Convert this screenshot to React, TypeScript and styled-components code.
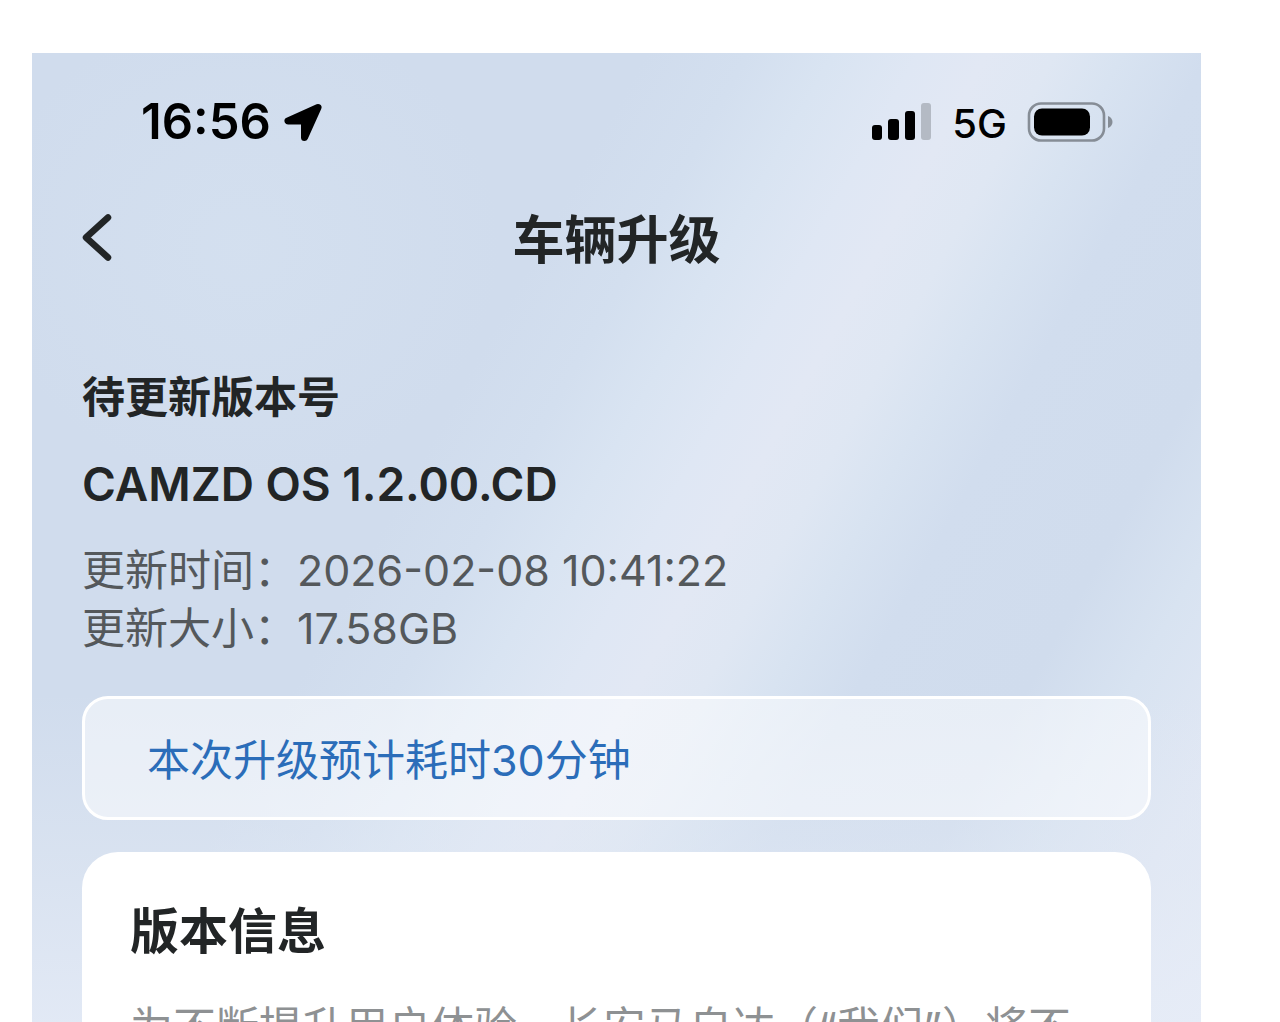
import React from "react";
import styled, { createGlobalStyle } from "styled-components";

const GlobalStyle = createGlobalStyle`
  *, *::before, *::after { box-sizing: border-box; }
  body {
    margin: 0;
    background: #fff;
    color: #222526;
    font-family: Inter, "Noto Sans CJK SC", sans-serif;
  }
  h1, h2, p, dl, dd { margin: 0; }
`;

const Page = styled.div`
  display: flex;
  height: 100vh;
  padding: 53px 79px 0 32px;
  overflow: hidden;
`;

const Screen = styled.div`
  flex: 1;
  min-width: 0;
  overflow: hidden;
  background:
    radial-gradient(ellipse 260px 240px at 18% 20%, rgba(213, 225, 240, 0.7), rgba(213, 225, 240, 0)),
    linear-gradient(180deg, rgba(226, 233, 244, 0) 66%, rgba(226, 233, 244, 0.5) 84%, rgba(230, 236, 247, 0.8) 100%),
    linear-gradient(119deg, #d0dced 0%, #d0dced 36%, #d3dfef 42%, #d9e4f2 47%, #dfe7f4 52%, #e2e8f4 56%, #dfe7f3 60%, #d8e3f1 64%, #d1ddee 69%, #d0dced 79%, #d8e3f1 85%, #e0e7f4 92%, #e6ebf6 100%);
`;

const StatusBar = styled.div`
  display: flex;
  align-items: center;
  justify-content: space-between;
  height: 138px;
  padding: 0 88px 0 109px;
  color: #000;
`;

const StatusGroup = styled.div<{ $gap: number }>`
  display: flex;
  align-items: center;
  gap: ${(p) => p.$gap}px;
`;

const Clock = styled.time`
  font-size: 49px;
  font-weight: 600;
  line-height: 60px;
`;

const Network = styled.span`
  padding-top: 4px;
  font-size: 40px;
  font-weight: 500;
  line-height: 60px;
`;

const NavBar = styled.header`
  display: grid;
  grid-template-columns: 1fr auto 1fr;
  align-items: center;
  height: 92px;
  padding: 0 50px;
`;

const BackButton = styled.button`
  display: flex;
  justify-self: start;
  padding: 0;
  border: 0;
  background: none;
  color: inherit;
  cursor: pointer;
`;

const NavTitle = styled.h1`
  padding-top: 8px;
  font-size: 52px;
  font-weight: 700;
  line-height: 76px;
`;

const Content = styled.main`
  padding: 80px 50px 0;
`;

const Label = styled.p`
  font-size: 43px;
  font-weight: 700;
  line-height: 68px;
`;

const Version = styled.h2`
  margin-top: 19px;
  font-size: 46px;
  font-weight: 600;
  line-height: 68px;
`;

const Details = styled.dl`
  margin-top: 23px;
  color: #54585b;
  font-size: 43px;
  line-height: 58px;
`;

const DetailRow = styled.div`
  display: flex;
`;

const Notice = styled.p`
  margin-top: 39px;
  padding: 32px 62px 28px;
  border: 3px solid #fff;
  border-radius: 26px;
  background: rgba(255, 255, 255, 0.5);
  color: #2b6db9;
  font-size: 43px;
  line-height: 58px;
`;

const Card = styled.section`
  margin-top: 32px;
  padding: 46px 48px 48px;
  border-radius: 36px;
  background: #fff;
`;

const CardTitle = styled.h2`
  font-size: 49px;
  font-weight: 700;
  line-height: 68px;
`;

const CardText = styled.p`
  margin-top: 32px;
  color: #8e9193;
  font-size: 43px;
  line-height: 58px;
  white-space: nowrap;
`;

const details = [
  { name: "更新时间：", value: "2026-02-08 10:41:22" },
  { name: "更新大小：", value: "17.58GB" },
];

function LocationArrow() {
  return (
    <svg width="40" height="40" viewBox="0 0 40 40" aria-hidden="true">
      <path
        d="M35 5.5 5 19H21.5V35.5Z"
        fill="currentColor"
        stroke="currentColor"
        strokeWidth="7"
        strokeLinejoin="round"
      />
    </svg>
  );
}

function SignalBars() {
  return (
    <svg width="60" height="38" viewBox="0 0 60 38" role="img" aria-label="Signal">
      <rect x="0" y="22" width="10" height="15" rx="3" />
      <rect x="16" y="16" width="11" height="21" rx="3" />
      <rect x="33" y="8" width="10" height="29" rx="3" />
      <rect x="49" y="0" width="10" height="37" rx="3" fill="#b4bac4" />
    </svg>
  );
}

function Battery() {
  return (
    <svg width="86" height="40" viewBox="0 0 86 40" role="img" aria-label="Battery">
      <rect x="2" y="1.5" width="75" height="37" rx="12" fill="none" stroke="#868d96" strokeWidth="2.6" />
      <rect x="7" y="6.5" width="56" height="27" rx="8" />
      <path d="M81 14c6 2 6 10 0 12Z" fill="#868d96" />
    </svg>
  );
}

function BackIcon() {
  return (
    <svg width="30" height="48" viewBox="0 0 30 48" aria-hidden="true">
      <path
        d="M26 4.5 4 24.5 26 44.5"
        fill="none"
        stroke="currentColor"
        strokeWidth="6.5"
        strokeLinecap="round"
        strokeLinejoin="round"
      />
    </svg>
  );
}

export default function App() {
  return (
    <Page>
      <GlobalStyle />
      <Screen>
        <StatusBar>
          <StatusGroup $gap={12}>
            <Clock>16:56</Clock>
            <LocationArrow />
          </StatusGroup>
          <StatusGroup $gap={20}>
            <SignalBars />
            <Network>5G</Network>
            <Battery />
          </StatusGroup>
        </StatusBar>
        <NavBar>
          <BackButton type="button" aria-label="返回">
            <BackIcon />
          </BackButton>
          <NavTitle>车辆升级</NavTitle>
        </NavBar>
        <Content>
          <Label>待更新版本号</Label>
          <Version>CAMZD OS 1.2.00.CD</Version>
          <Details>
            {details.map((item) => (
              <DetailRow key={item.name}>
                <dt>{item.name}</dt>
                <dd>{item.value}</dd>
              </DetailRow>
            ))}
          </Details>
          <Notice>本次升级预计耗时30分钟</Notice>
          <Card>
            <CardTitle>版本信息</CardTitle>
            <CardText>为不断提升用户体验，长安马自达（“我们”）将不</CardText>
          </Card>
        </Content>
      </Screen>
    </Page>
  );
}
